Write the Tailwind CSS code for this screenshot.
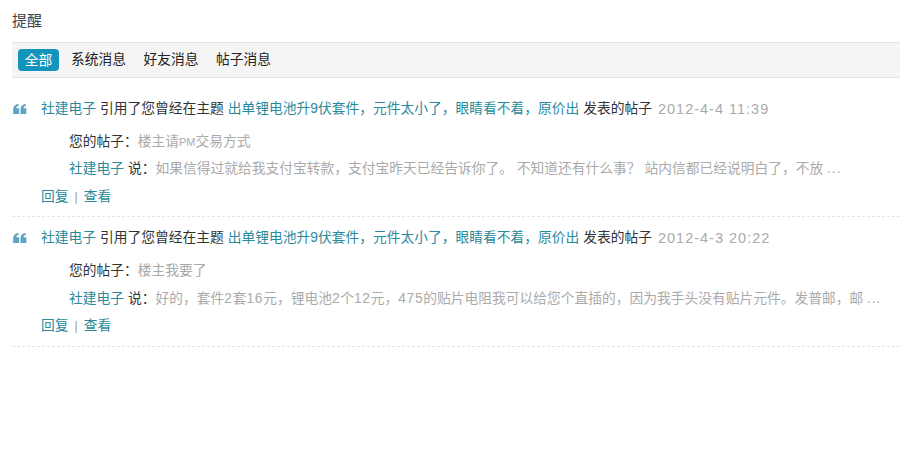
<!DOCTYPE html>
<html lang="zh-CN">
<head>
    <meta charset="UTF-8">
    <title>提醒</title>
    <script src="https://cdn.jsdelivr.net/npm/@tailwindcss/browser@4"></script>
</head>
<body class="bg-white h-[468px] overflow-hidden font-['Liberation_Sans','Noto_Sans_CJK_SC',sans-serif] text-[13.75px] text-[#333]">
    <h2 class="pl-3 h-[42px] pt-[11px] leading-5 text-[15px] font-normal text-[#444]">提醒</h2>
    <div class="ml-3 h-[36px] flex items-center gap-[17.5px] pl-[6px] bg-[#f5f5f5] border-y border-[#e4e4e4]">
        <span class="w-[41px] h-[22px] leading-[24px] text-center rounded-[4px] bg-[#1394bd] text-white">全部</span>
        <span class="-ml-[5.5px] pt-px text-[#222]">系统消息</span>
        <span class="pt-px text-[#222]">好友消息</span>
        <span class="pt-px text-[#222]">帖子消息</span>
    </div>

    <div class="ml-3 mt-[10px]">
        <div class="h-[129px] pt-[11px] border-b border-dashed border-[#e4e4e4]">
            <div class="flex items-center h-5 leading-5">
                <svg class="ml-px w-[14px] h-[10px] shrink-0 mr-[14px]" viewBox="0 0 15 11" fill="#5fa3c4"><path d="M0 11V6C0 2.5 2 .5 6 0v2C4.300 2.400 3.500 3.300 3.400 4.600H6.500V11ZM8 11V6C8 2.500 10 .5 14 0v2C12.300 2.400 11.500 3.300 11.400 4.600H14.500V11Z"/></svg>
                <a class="text-[#2a8a9c]">社建电子</a>
                <span class="ml-1">引用了您曾经在主题</span>
                <a class="ml-1 text-[#2a8a9c]">出单锂电池升9伏套件，元件太小了，眼睛看不着，原价出</a>
                <span class="ml-1">发表的帖子</span>
                <span class="ml-[6px] text-[14.5px] text-[#aaa] tracking-[1px]">2012-4-4 11:39</span>
            </div>
            <div class="pl-[57px] pt-[13px] h-5 leading-5 box-content"><span>您的帖子：</span><span class="text-[#aaa]">楼主请<span class="text-[11px]">PM</span>交易方式</span></div>
            <div class="pl-[57px] pt-[7px] h-5 leading-5 box-content"><a class="text-[#2a8a9c]">社建电子</a><span class="ml-1">说：</span><span class="text-[#aaa]">如果信得过就给我支付宝转款，支付宝昨天已经告诉你了。 不知道还有什么事？ 站内信都已经说明白了，不放 <span class="tracking-[1px]">...</span></span></div>
            <div class="pl-[29px] pt-2 h-5 leading-5 box-content"><a class="text-[#2a8a9c]">回复</a><span class="mx-[6px] text-[#999] text-xs">|</span><a class="text-[#2a8a9c]">查看</a></div>
        </div>

        <div class="h-[130px] pt-[11px] border-b border-dashed border-[#e4e4e4]">
            <div class="flex items-center h-5 leading-5">
                <svg class="ml-px w-[14px] h-[10px] shrink-0 mr-[14px]" viewBox="0 0 15 11" fill="#5fa3c4"><path d="M0 11V6C0 2.5 2 .5 6 0v2C4.300 2.400 3.500 3.300 3.400 4.600H6.500V11ZM8 11V6C8 2.500 10 .5 14 0v2C12.300 2.400 11.500 3.300 11.400 4.600H14.500V11Z"/></svg>
                <a class="text-[#2a8a9c]">社建电子</a>
                <span class="ml-1">引用了您曾经在主题</span>
                <a class="ml-1 text-[#2a8a9c]">出单锂电池升9伏套件，元件太小了，眼睛看不着，原价出</a>
                <span class="ml-1">发表的帖子</span>
                <span class="ml-[6px] text-[14.5px] text-[#aaa] tracking-[1px]">2012-4-3 20:22</span>
            </div>
            <div class="pl-[57px] pt-[13px] h-5 leading-5 box-content"><span>您的帖子：</span><span class="text-[#aaa]">楼主我要了</span></div>
            <div class="pl-[57px] pt-2 h-5 leading-5 box-content"><a class="text-[#2a8a9c]">社建电子</a><span class="ml-1">说：</span><span class="text-[#aaa]">好的，套件<span class="tracking-[0.7px]">2</span>套<span class="tracking-[0.7px]">16</span>元，锂电池<span class="tracking-[0.7px]">2</span>个<span class="tracking-[0.7px]">12</span>元，<span class="tracking-[0.7px]">475</span>的贴片电阻我可以给您个直插的，因为我手头没有贴片元件。发普邮，邮 <span class="tracking-[0.7px]">...</span></span></div>
            <div class="pl-[29px] pt-[7px] h-5 leading-5 box-content"><a class="text-[#2a8a9c]">回复</a><span class="mx-[6px] text-[#999] text-xs">|</span><a class="text-[#2a8a9c]">查看</a></div>
        </div>
    </div>
</body>
</html>
